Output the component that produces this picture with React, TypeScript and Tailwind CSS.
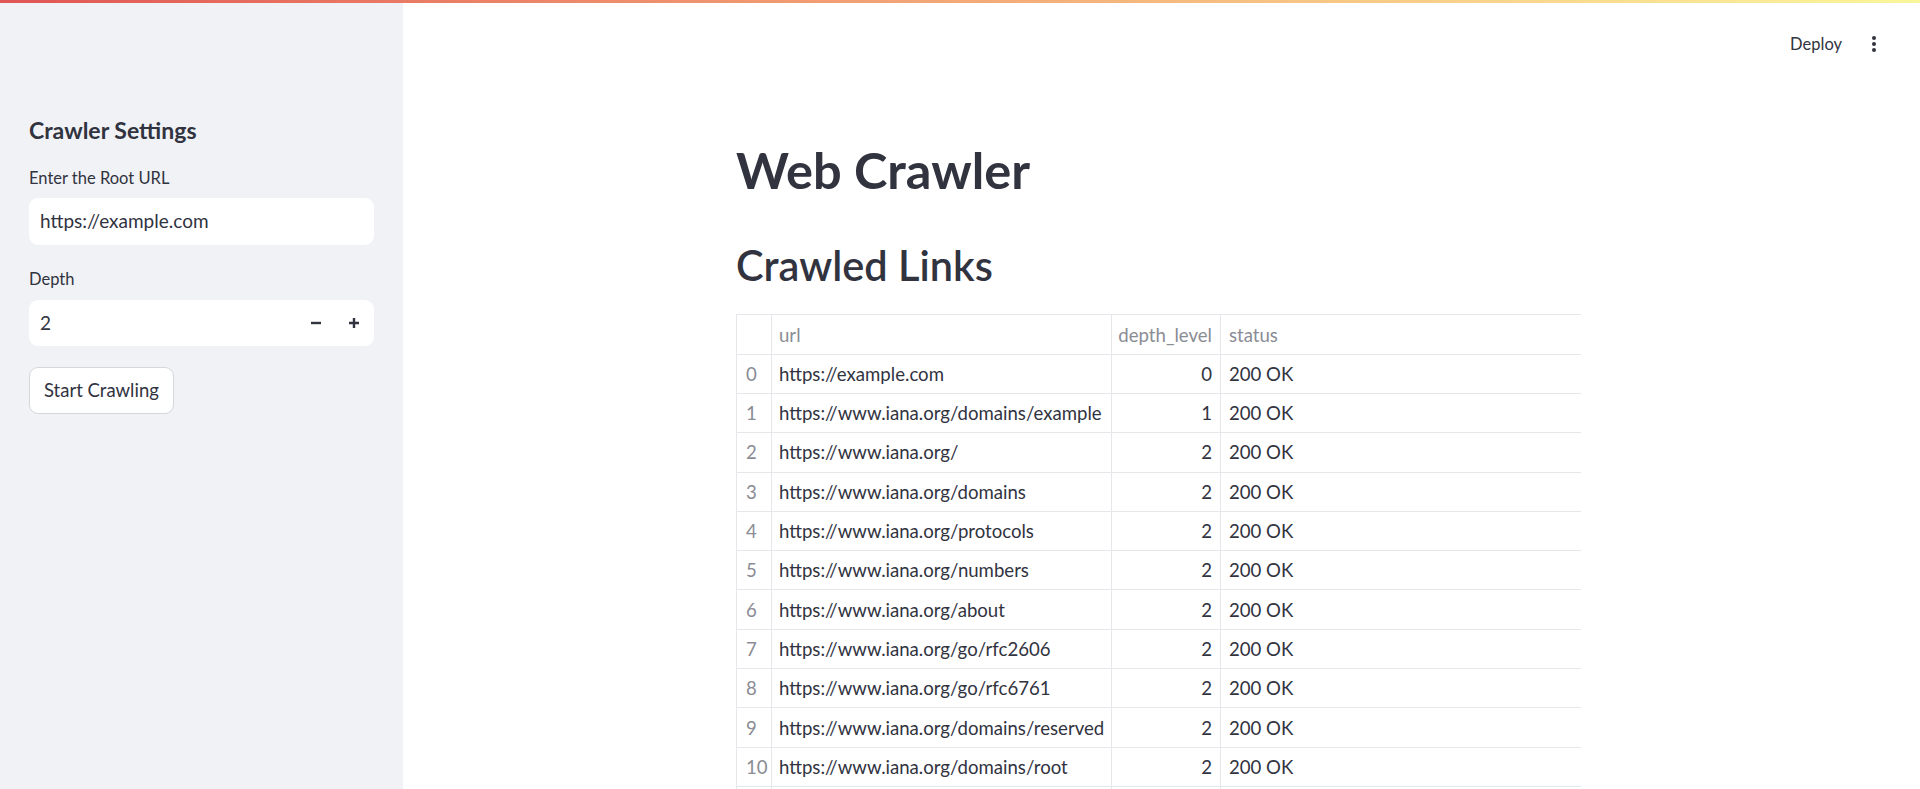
import React from 'react';

interface Row {
  url: string;
  depth: number;
  status: string;
}

const rows: Row[] = [
  { url: 'https://example.com', depth: 0, status: '200 OK' },
  { url: 'https://www.iana.org/domains/example', depth: 1, status: '200 OK' },
  { url: 'https://www.iana.org/', depth: 2, status: '200 OK' },
  { url: 'https://www.iana.org/domains', depth: 2, status: '200 OK' },
  { url: 'https://www.iana.org/protocols', depth: 2, status: '200 OK' },
  { url: 'https://www.iana.org/numbers', depth: 2, status: '200 OK' },
  { url: 'https://www.iana.org/about', depth: 2, status: '200 OK' },
  { url: 'https://www.iana.org/go/rfc2606', depth: 2, status: '200 OK' },
  { url: 'https://www.iana.org/go/rfc6761', depth: 2, status: '200 OK' },
  { url: 'https://www.iana.org/domains/reserved', depth: 2, status: '200 OK' },
  { url: 'https://www.iana.org/domains/root', depth: 2, status: '200 OK' },
];

const font = { fontFamily: 'Lato, "Liberation Sans", sans-serif' };

const Sidebar: React.FC = () => (
  <aside className="w-[403px] shrink-0 h-full bg-[#f0f2f6] px-[29px] pt-[115px] text-[#31333f]">
    <h2 className="text-[23px] leading-[30px] font-bold">Crawler Settings</h2>

    <label className="block mt-[22px] text-[16.5px] leading-[22px]">Enter the Root URL</label>
    <div className="mt-[9px] h-[47px] rounded-[9px] bg-white flex items-center px-[11px] text-[19px]">
      https://example.com
    </div>

    <label className="block mt-[23px] text-[16.5px] leading-[22px]">Depth</label>
    <div className="mt-[10px] h-[46px] rounded-[9px] bg-white flex items-center pl-[11px] text-[19px]">
      <span className="flex-1">2</span>
      <button className="w-[38px] h-full flex items-center justify-center">
        <svg width="12" height="12" viewBox="0 0 12 12">
          <path d="M1 6h10" stroke="#31333f" strokeWidth="2.4" />
        </svg>
      </button>
      <button className="w-[38px] h-full flex items-center justify-center mr-[1px]">
        <svg width="12" height="12" viewBox="0 0 12 12">
          <path d="M1 6h10M6 1v10" stroke="#31333f" strokeWidth="2.4" />
        </svg>
      </button>
    </div>

    <button className="mt-[21px] h-[47px] px-[14px] rounded-[9px] border border-[#d5d7dd] bg-white text-[18.5px] text-[#31333f]">
      Start Crawling
    </button>
  </aside>
);

const DataTable: React.FC = () => (
  <table className="mt-[24px] w-full border-collapse table-fixed text-[18.6px]">
    <colgroup>
      <col className="w-[35px]" />
      <col className="w-[340px]" />
      <col className="w-[109px]" />
      <col />
    </colgroup>
    <thead>
      <tr className="h-[39.3px] text-[#8a8c94]">
        <th className="border border-[#e6e7ea] border-r-0 font-normal"></th>
        <th className="border-t border-l border-b border-[#e6e7ea] font-normal text-left pl-[7px] pt-[3px]">url</th>
        <th className="border-t border-l border-b border-[#e6e7ea] font-normal text-right pr-[8px] pt-[3px]">depth_level</th>
        <th className="border-t border-l border-b border-[#e6e7ea] font-normal text-left pl-[8px] pt-[3px]">status</th>
      </tr>
    </thead>
    <tbody>
      {rows.map((r, i) => (
        <tr key={i} className="h-[39.3px]">
          <td className="border-l border-b border-[#e6e7ea] text-[#8a8c94] pl-[9px] pt-[2px] whitespace-nowrap">{i}</td>
          <td className="border-l border-b border-[#e6e7ea] pl-[7px] pt-[2px] whitespace-nowrap">{r.url}</td>
          <td className="border-l border-b border-[#e6e7ea] text-right pr-[8px] pt-[2px]">{r.depth}</td>
          <td className="border-l border-b border-[#e6e7ea] pl-[8px] pt-[2px]">{r.status}</td>
        </tr>
      ))}
      {/* next row continues below the fold */}
      <tr className="h-[39.3px]">
        <td className="border-l border-[#e6e7ea]"></td>
        <td className="border-l border-[#e6e7ea]"></td>
        <td className="border-l border-[#e6e7ea]"></td>
        <td className="border-l border-[#e6e7ea]"></td>
      </tr>
    </tbody>
  </table>
);

export default function App() {
  return (
    <div className="relative h-screen w-full overflow-hidden flex bg-white text-[#31333f]" style={font}>
      <div className="absolute top-0 left-0 right-0 h-[3px] bg-gradient-to-r from-[#e05555] to-[#f9f69c] z-10" />
      <Sidebar />
      <main className="flex-1 flex flex-col">
        <header className="h-[88px] shrink-0 flex items-center justify-end pr-[43px]">
          <span className="text-[16.5px] mr-[29px]">Deploy</span>
          <svg width="6" height="18" viewBox="0 0 6 18">
            <circle cx="3" cy="3" r="2" fill="#31333f" />
            <circle cx="3" cy="9" r="2" fill="#31333f" />
            <circle cx="3" cy="15" r="2" fill="#31333f" />
          </svg>
        </header>
        <div className="w-[845px] mx-auto -translate-x-[3px]">
          <h1 className="mt-[52px] text-[50.5px] leading-[1.2] font-bold">Web Crawler</h1>
          <h2 className="mt-[40px] text-[41.5px] leading-[1.2] font-semibold">Crawled Links</h2>
          <DataTable />
        </div>
      </main>
    </div>
  );
}
